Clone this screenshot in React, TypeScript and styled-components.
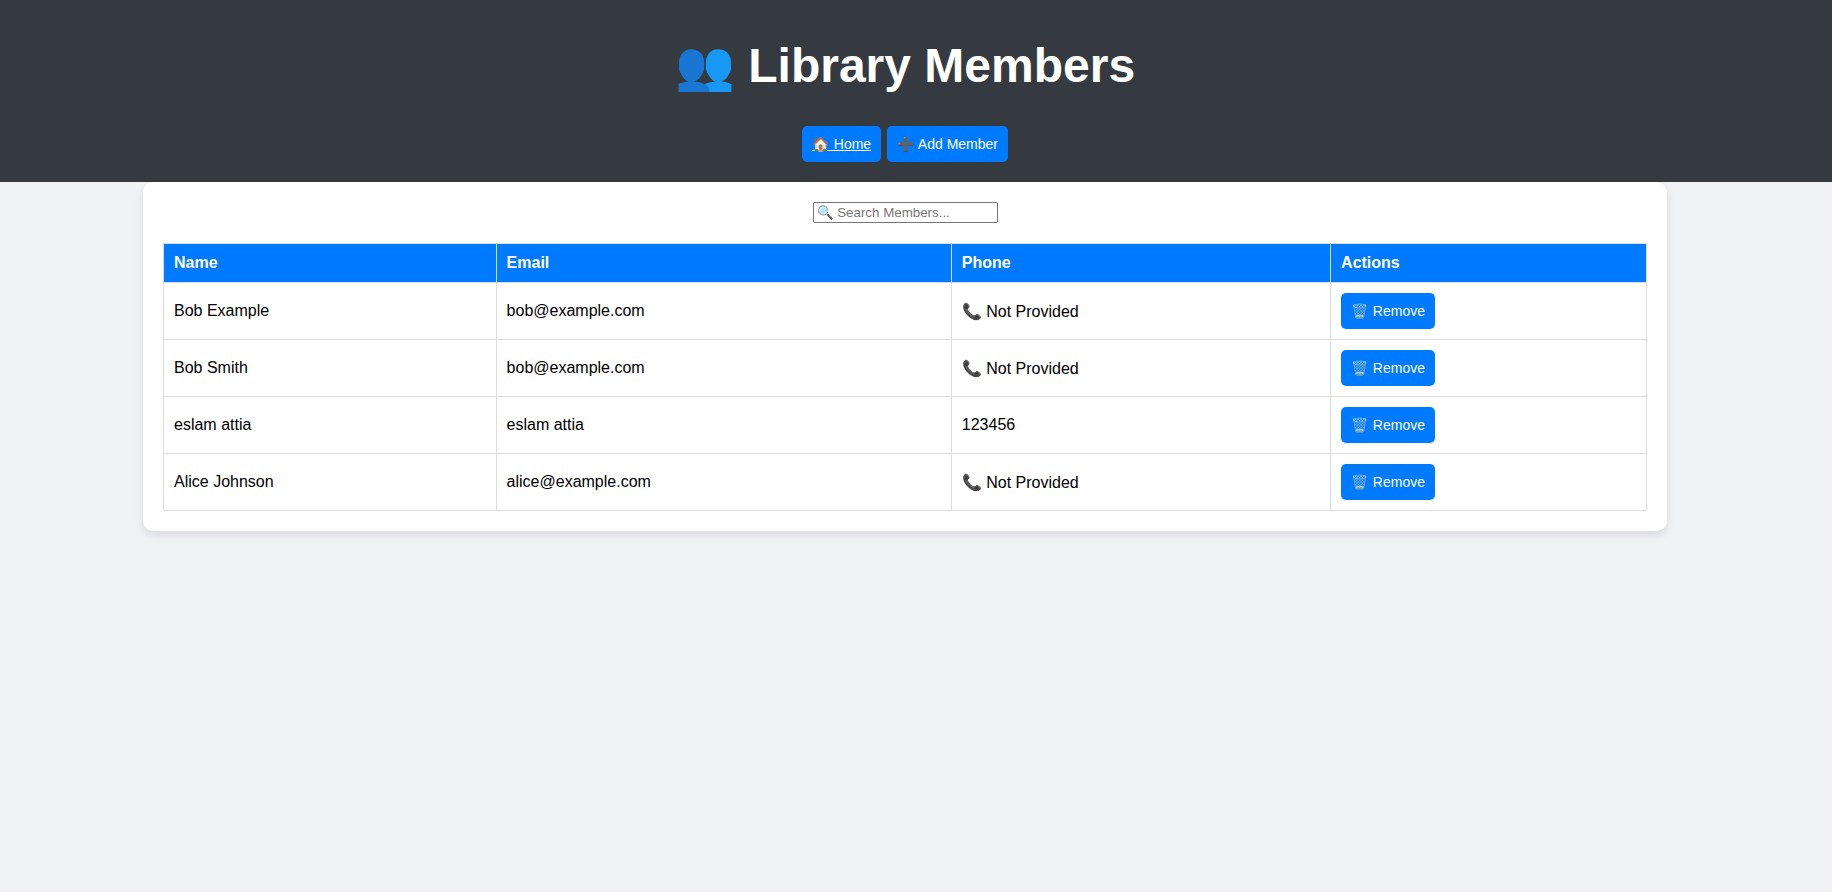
import React from "react";
import styled, { createGlobalStyle } from "styled-components";

const fontStack = 'Arial, "Liberation Sans", sans-serif';

const GlobalStyle = createGlobalStyle`
  body {
    margin: 0;
    min-height: 100vh;
    background: #f0f2f5;
    font-family: ${fontStack};
    color: #000;
    text-align: center;
  }
`;

const Header = styled.header`
  background: #343a40;
  color: #fff;
  padding: 20px 42px 20px 20px;
`;

const Title = styled.h1`
  font-size: 48px;
  line-height: 55px;
  margin: 17.5px 0 33.5px;
  font-weight: 700;
`;

const Nav = styled.nav`
  display: flex;
  justify-content: center;
  gap: 5.7px;
`;

const Button = styled.button`
  background: #007bff;
  color: #fff;
  border: 0;
  border-radius: 5px;
  padding: 10px;
  font-family: ${fontStack};
  font-size: 14px;
  line-height: 16px;
  cursor: pointer;
`;

const Icon = styled.span`
  letter-spacing: 0.9px;
`;

const HomeLink = styled.a`
  text-decoration: underline;
`;

const Page = styled.div`
  box-sizing: border-box;
  min-height: calc(100vh - 182px);
  padding-right: 22px;
`;

const Card = styled.main`
  box-sizing: border-box;
  width: 1524px;
  margin: 0 auto;
  padding: 20px;
  background: #fff;
  border-radius: 10px;
  box-shadow: 0 4px 8px rgba(0, 0, 0, 0.1);
`;

const Search = styled.input`
  display: block;
  margin: 0 auto 20px;
  font-family: ${fontStack};
`;

const Table = styled.table`
  width: 100%;
  table-layout: fixed;
  border-collapse: collapse;
  text-align: left;
  font-size: 16px;
`;

const Column = styled.col<{ $width?: number }>`
  width: ${(p) => (p.$width ? `${p.$width}px` : "auto")};
`;

const Th = styled.th`
  background: #007bff;
  color: #fff;
  border: 1px solid #ddd;
  padding: 10px;
`;

const Td = styled.td`
  border: 1px solid #ddd;
  padding: 10px;
`;

interface Member {
  name: string;
  email: string;
  phone?: string;
}

const members: Member[] = [
  { name: "Bob Example", email: "bob@example.com" },
  { name: "Bob Smith", email: "bob@example.com" },
  { name: "eslam attia", email: "eslam attia", phone: "123456" },
  { name: "Alice Johnson", email: "alice@example.com" },
];

export default function App() {
  return (
    <>
      <GlobalStyle />
      <Header>
        <Title>👥 Library Members</Title>
        <Nav>
          <Button>
            <HomeLink>
              <Icon>🏠</Icon> Home
            </HomeLink>
          </Button>
          <Button>
            <Icon>➕</Icon> Add Member
          </Button>
        </Nav>
      </Header>
      <Page>
        <Card>
          <Search placeholder="🔍 Search Members..." />
          <Table>
            <colgroup>
              <Column $width={332.6} />
              <Column $width={455.2} />
              <Column $width={379.3} />
              <Column />
            </colgroup>
            <thead>
              <tr>
                <Th>Name</Th>
                <Th>Email</Th>
                <Th>Phone</Th>
                <Th>Actions</Th>
              </tr>
            </thead>
            <tbody>
              {members.map((member) => (
                <tr key={member.name}>
                  <Td>{member.name}</Td>
                  <Td>{member.email}</Td>
                  <Td>{member.phone ?? "📞 Not Provided"}</Td>
                  <Td>
                    <Button>
                      <Icon>🗑️</Icon> Remove
                    </Button>
                  </Td>
                </tr>
              ))}
            </tbody>
          </Table>
        </Card>
      </Page>
    </>
  );
}
